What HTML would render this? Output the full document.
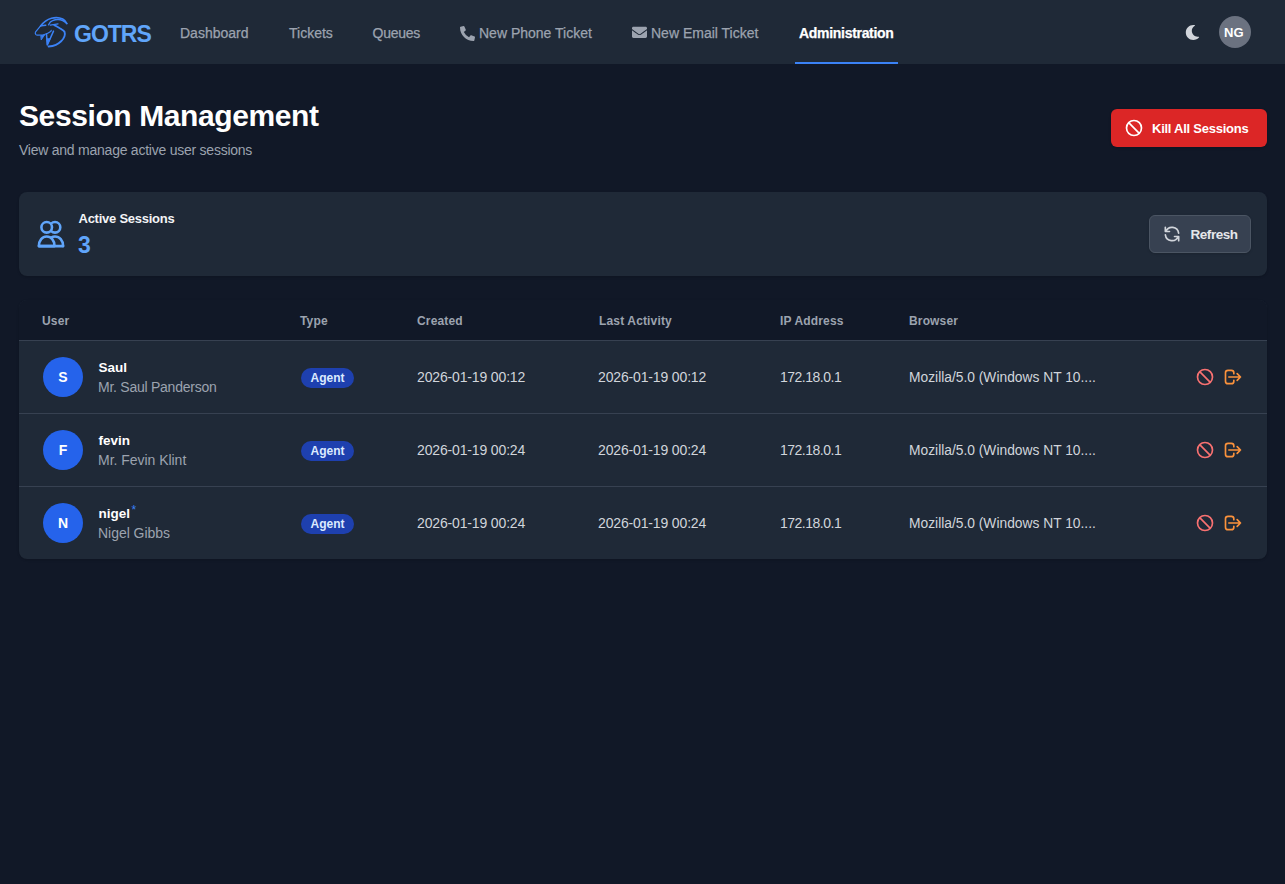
<!DOCTYPE html>
<html><head><meta charset="utf-8">
<style>
*{margin:0;padding:0;box-sizing:border-box}
html,body{width:1285px;height:884px;overflow:hidden;background:#111827;font-family:"Liberation Sans",sans-serif}
.a{position:absolute;white-space:nowrap;line-height:1}
.nav{position:absolute;left:0;top:0;width:1285px;height:64px;background:#1f2937}
.nl{font-size:14px;color:#9ca3af;top:26px;-webkit-text-stroke:0.25px currentColor}
.sb{-webkit-text-stroke:0.5px currentColor}
.card{position:absolute;background:#1f2937;border-radius:8px;box-shadow:0 1px 3px 0 rgba(0,0,0,.1),0 1px 2px -1px rgba(0,0,0,.1)}
svg{position:absolute;overflow:visible}
.th{font-size:12px;font-weight:bold;color:#9ca3af;top:315px;letter-spacing:0.15px}
.row{position:absolute;left:19px;width:1248px;height:72px;background:#1f2937}
.av{position:absolute;width:40px;height:40px;border-radius:50%;background:#2563eb;color:#fff;font-size:14px;font-weight:bold;text-align:center;line-height:40px}
.badge{position:absolute;width:53px;height:20px;border-radius:10px;background:#1e40af;color:#dbeafe;font-size:12px;font-weight:bold;text-align:center;line-height:21px}
.td{font-size:14px;color:#d1d5db}
.nm{font-size:14px;color:#fff}
.sub{font-size:14px;color:#9ca3af}
</style></head><body>
<div class="nav">
  <!-- logo -->
  <svg style="left:0;top:0" width="80" height="64" viewBox="0 0 80 64" fill="none" stroke="#3b82f6" stroke-linecap="round" stroke-linejoin="round">
    <path stroke-width="1.7" d="M40.6 26 C42.8 23 46.6 19.5 51.5 18.2 C55 17.3 59.5 17.4 62.7 19.1 C64.5 20.1 66 21.6 66.8 23.5"/>
    <path stroke-width="1.4" d="M48.6 24.8 C49.6 22.6 51 21.2 52.6 20.7 C54.2 20 55.9 19.5 57.6 19.5 C60.6 19.4 64 20.6 66.8 23.5"/>
    <path stroke-width="1.9" d="M54.3 25.1 C56.6 26.2 58.6 27.4 60.2 28.5 C62.1 29.7 63.8 30.5 64.5 31.7 C65.1 33.6 65.1 35.1 64.5 36.2 C63.7 38.4 62.6 39.9 61.1 41.3 C59.6 42.7 57.9 43.9 55.9 44.8 C53.6 45.8 51.1 46.3 48.6 46.5"/>
    <path stroke-width="1.3" d="M50.3 25.2 L58 23.8"/>
    <path stroke-width="1.5" d="M41 25.8 L45.8 25.2"/>
    <path stroke-width="1.2" d="M40.6 25.9 L35.6 31.8 C35.1 32.6 35.2 33.8 35.9 34.6 C36.4 35.1 36.9 35.2 37.4 35.2 L43.8 35"/>
    <path stroke-width="0.8" fill="#3b82f6" d="M41 35.6 L44.5 35.1 L41.4 39.7 Z"/>
    <path stroke-width="1.2" d="M43.8 34.8 C46.1 34 48.6 33 50.7 31.5 L51.2 30.4"/>
    <path stroke-width="1.5" d="M46.5 34.1 L47.3 45 L53.5 31.1"/>
    <path stroke-width="0.8" fill="#3b82f6" d="M46.7 39 L47.3 45 L50.1 38.9 Z"/>
  </svg>
  <span class="a" style="left:74px;top:22.5px;font-size:23px;font-weight:bold;color:#60a5fa;letter-spacing:-1px">GOTRS</span>
  <span class="a nl" style="left:180px">Dashboard</span>
  <span class="a nl" style="left:289px">Tickets</span>
  <span class="a nl" style="left:372.5px;letter-spacing:-0.25px">Queues</span>
  <svg style="left:460px;top:26px" width="15" height="15" viewBox="0 0 512 512"><path fill="#9ca3af" d="M497.4 361.8l-112-48a24 24 0 0 0-28 6.9l-49.6 60.6A370.7 370.7 0 0 1 130.6 204.1l60.6-49.6a23.9 23.9 0 0 0 6.9-28l-48-112A24.2 24.2 0 0 0 122.6.6l-104 24A24 24 0 0 0 0 48c0 256.5 207.9 464 464 464a24 24 0 0 0 23.4-18.6l24-104a24.3 24.3 0 0 0-14-27.6z"/></svg>
  <span class="a nl" style="left:479px">New Phone Ticket</span>
  <svg style="left:632px;top:27px" width="15" height="12" viewBox="0 0 512 400"><path fill="#9ca3af" d="M502.3 126.6c3.9-3.1 9.7-.2 9.7 4.7V336c0 26.5-21.5 48-48 48H48c-26.5 0-48-21.5-48-48V131.4c0-5 5.7-7.8 9.7-4.7 22.4 17.4 52.1 39.5 154.1 113.6 21.1 15.4 56.7 47.8 92.2 47.6 35.7.3 72-32.8 92.3-47.6 102-74.1 131.6-96.3 154-113.7zM256 256c23.2.4 56.6-29.2 73.4-41.4 132.7-96.3 142.8-104.7 173.4-128.7 5.8-4.5 9.2-11.5 9.2-18.9v-19c0-26.5-21.5-48-48-48H48C21.5 0 0 21.5 0 48v19c0 7.4 3.4 14.3 9.2 18.9 30.6 23.9 40.7 32.4 173.4 128.7 16.8 12.2 50.2 41.8 73.4 41.4z" transform="translate(0 -16)"/></svg>
  <span class="a nl" style="left:651px">New Email Ticket</span>
  <span class="a nl" style="left:799px;color:#fff;font-weight:bold;letter-spacing:-0.3px">Administration</span>
  <div style="position:absolute;left:795px;top:62px;width:103px;height:2px;background:#3b82f6"></div>
  <!-- moon -->
  <svg style="left:1185px;top:25px" width="15" height="15" viewBox="0 0 512 512"><path fill="#d1d5db" d="M283.211 512c78.962 0 151.079-35.925 198.857-94.792 7.068-8.708-.639-21.43-11.562-19.35-124.203 23.654-238.262-71.576-238.262-198.022 0-72.839 38.993-139.816 102.368-175.881 9.715-5.529 7.272-20.26-3.766-22.299A258.156 258.156 0 0 0 283.211 0c-141.309 0-256 114.511-256 256 0 141.309 114.511 256 256 256z"/></svg>
  <div style="position:absolute;left:1219px;top:16px;width:32px;height:32px;border-radius:50%;background:#6b7280"></div>
  <span class="a" style="left:1224px;top:26px;font-size:13px;font-weight:bold;color:#fff">NG</span>
</div>

<!-- header -->
<span class="a" style="left:19px;top:101px;font-size:30px;font-weight:bold;color:#fff;letter-spacing:-0.4px">Session Management</span>
<span class="a" style="left:19px;top:143px;font-size:14px;letter-spacing:-0.24px;color:#9ca3af">View and manage active user sessions</span>

<div class="card" style="left:1111px;top:109px;width:156px;height:38px;background:#dc2626;border-radius:6px"></div>
<svg style="left:1124px;top:118px" width="20" height="20" viewBox="0 0 24 24" fill="none" stroke="#fff" stroke-width="2" stroke-linecap="round"><path d="M18.364 18.364A9 9 0 0 0 5.636 5.636m12.728 12.728A9 9 0 0 1 5.636 5.636m12.728 12.728L5.636 5.636"/></svg>
<span class="a" style="left:1152px;top:121.5px;font-size:13px;font-weight:bold;letter-spacing:-0.25px;color:#fff">Kill All Sessions</span>

<!-- active sessions card -->
<div class="card" style="left:19px;top:192px;width:1248px;height:84px"></div>
<svg style="left:0;top:0" width="80" height="300" viewBox="0 0 80 300" fill="none" stroke="#60a5fa" stroke-width="2.6" stroke-linejoin="round" stroke-linecap="round">
  <circle cx="55" cy="227.3" r="5.3"/>
  <path d="M49 239.5 C50 238 52 236.5 55 236.5 C59.5 236.5 63.1 240.5 63.1 246.1"/>
  <circle cx="46.7" cy="227.3" r="5.3" fill="#1f2937"/>
  <path d="M38.9 246.1 C38.9 240.5 42.3 236.5 46.7 236.5 C51.1 236.5 54.5 240.5 54.5 246.1 Z" fill="#1f2937"/>
  <path d="M38.9 246.1 L63 246.1"/>
</svg>
<span class="a" style="left:78.5px;top:211.5px;font-size:13px;font-weight:bold;letter-spacing:-0.25px;color:#f3f4f6">Active Sessions</span>
<span class="a" style="left:78px;top:233.5px;font-size:23px;font-weight:bold;color:#60a5fa">3</span>

<div class="card" style="left:1149px;top:215px;width:102px;height:38px;background:#374151;border:1px solid #4b5563;border-radius:6px"></div>
<svg style="left:1162px;top:224px" width="20" height="20" viewBox="0 0 24 24" fill="none" stroke="#d1d5db" stroke-width="2" stroke-linecap="round" stroke-linejoin="round"><path d="M4 4v5h.582m15.356 2A8.001 8.001 0 004.582 9m0 0H9m11 11v-5h-.581m0 0a8.003 8.003 0 01-15.357-2m15.357 2H15"/></svg>
<span class="a" style="left:1190.5px;top:228px;font-size:13.5px;font-weight:bold;letter-spacing:-0.45px;color:#e5e7eb">Refresh</span>

<!-- table -->
<div class="card" style="left:19px;top:300px;width:1248px;height:259px;background:#1f2937;overflow:hidden">
  <div style="position:absolute;left:0;top:0;width:1248px;height:40px;background:#111827"></div>
  <div style="position:absolute;left:0;top:40px;width:1248px;height:1px;background:#374151"></div>
  <div style="position:absolute;left:0;top:113px;width:1248px;height:1px;background:#374151"></div>
  <div style="position:absolute;left:0;top:186px;width:1248px;height:1px;background:#374151"></div>
</div>
<span class="a th" style="left:42px">User</span>
<span class="a th" style="left:300px">Type</span>
<span class="a th" style="left:417px">Created</span>
<span class="a th" style="left:599px">Last Activity</span>
<span class="a th" style="left:780px">IP Address</span>
<span class="a th" style="left:909px">Browser</span>


<div class="av" style="left:43px;top:357px">S</div>
<span class="a nm" style="left:98.5px;top:360.5px;font-weight:bold;font-size:13.5px">Saul</span>
<span class="a sub" style="left:98px;top:380px;letter-spacing:-0.25px">Mr. Saul Panderson</span>
<div class="badge" style="left:301px;top:368px">Agent</div>
<span class="a td" style="left:417px;top:370px;letter-spacing:-0.15px">2026-01-19 00:12</span>
<span class="a td" style="left:598px;top:370px;letter-spacing:-0.15px">2026-01-19 00:12</span>
<span class="a td" style="left:780px;top:370px;letter-spacing:-0.5px">172.18.0.1</span>
<span class="a td" style="left:909px;top:370.5px;font-size:13.8px">Mozilla/5.0 (Windows NT 10....</span>
<svg style="left:1195px;top:367px" width="20" height="20" viewBox="0 0 24 24" fill="none" stroke="#f87171" stroke-width="2" stroke-linecap="round"><path d="M18.364 18.364A9 9 0 0 0 5.636 5.636m12.728 12.728A9 9 0 0 1 5.636 5.636m12.728 12.728L5.636 5.636"/></svg>
<svg style="left:1223px;top:367px" width="20" height="20" viewBox="0 0 24 24" fill="none" stroke="#fb923c" stroke-width="2" stroke-linecap="round" stroke-linejoin="round"><path d="M17 16l4-4m0 0l-4-4m4 4H7m6 4v1a3 3 0 01-3 3H6a3 3 0 01-3-3V7a3 3 0 013-3h4a3 3 0 013 3v1"/></svg>
<div class="av" style="left:43px;top:430px">F</div>
<span class="a nm" style="left:98.5px;top:433.5px;font-weight:bold;font-size:13.5px">fevin</span>
<span class="a sub" style="left:98px;top:453px;letter-spacing:-0.03px">Mr. Fevin Klint</span>
<div class="badge" style="left:301px;top:441px">Agent</div>
<span class="a td" style="left:417px;top:443px;letter-spacing:-0.15px">2026-01-19 00:24</span>
<span class="a td" style="left:598px;top:443px;letter-spacing:-0.15px">2026-01-19 00:24</span>
<span class="a td" style="left:780px;top:443px;letter-spacing:-0.5px">172.18.0.1</span>
<span class="a td" style="left:909px;top:443.5px;font-size:13.8px">Mozilla/5.0 (Windows NT 10....</span>
<svg style="left:1195px;top:440px" width="20" height="20" viewBox="0 0 24 24" fill="none" stroke="#f87171" stroke-width="2" stroke-linecap="round"><path d="M18.364 18.364A9 9 0 0 0 5.636 5.636m12.728 12.728A9 9 0 0 1 5.636 5.636m12.728 12.728L5.636 5.636"/></svg>
<svg style="left:1223px;top:440px" width="20" height="20" viewBox="0 0 24 24" fill="none" stroke="#fb923c" stroke-width="2" stroke-linecap="round" stroke-linejoin="round"><path d="M17 16l4-4m0 0l-4-4m4 4H7m6 4v1a3 3 0 01-3 3H6a3 3 0 01-3-3V7a3 3 0 013-3h4a3 3 0 013 3v1"/></svg>
<div class="av" style="left:43px;top:503px">N</div>
<span class="a nm" style="left:98.5px;top:506.5px;font-weight:bold;font-size:13.5px">nigel</span>
<span class="a" style="left:131.5px;top:504px;font-size:12px;color:#3b82f6">*</span>
<span class="a sub" style="left:98px;top:526px;letter-spacing:-0.03px">Nigel Gibbs</span>
<div class="badge" style="left:301px;top:514px">Agent</div>
<span class="a td" style="left:417px;top:516px;letter-spacing:-0.15px">2026-01-19 00:24</span>
<span class="a td" style="left:598px;top:516px;letter-spacing:-0.15px">2026-01-19 00:24</span>
<span class="a td" style="left:780px;top:516px;letter-spacing:-0.5px">172.18.0.1</span>
<span class="a td" style="left:909px;top:516.5px;font-size:13.8px">Mozilla/5.0 (Windows NT 10....</span>
<svg style="left:1195px;top:513px" width="20" height="20" viewBox="0 0 24 24" fill="none" stroke="#f87171" stroke-width="2" stroke-linecap="round"><path d="M18.364 18.364A9 9 0 0 0 5.636 5.636m12.728 12.728A9 9 0 0 1 5.636 5.636m12.728 12.728L5.636 5.636"/></svg>
<svg style="left:1223px;top:513px" width="20" height="20" viewBox="0 0 24 24" fill="none" stroke="#fb923c" stroke-width="2" stroke-linecap="round" stroke-linejoin="round"><path d="M17 16l4-4m0 0l-4-4m4 4H7m6 4v1a3 3 0 01-3 3H6a3 3 0 01-3-3V7a3 3 0 013-3h4a3 3 0 013 3v1"/></svg>

</body></html>
